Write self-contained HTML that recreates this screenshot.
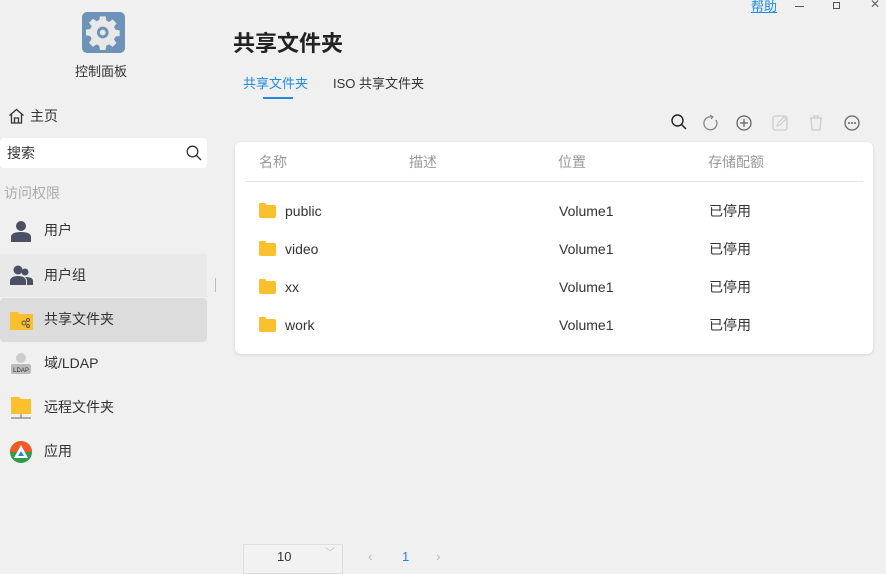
<!DOCTYPE html><html><head><meta charset="utf-8"><style>
*{margin:0;padding:0;box-sizing:border-box}
body{width:886px;height:565px;background:#f0f0f0;font-family:"Liberation Sans","Noto Sans CJK SC",sans-serif;position:relative;overflow:hidden;color:#333;line-height:1.15}
.a{position:absolute}
.t{font-size:14px;white-space:nowrap}
.row{position:absolute;left:0;width:207px;height:44px}
.row span{position:absolute;left:44px;top:13px;font-size:14px;color:#333}
.hd{position:absolute;top:154px;font-size:14px;color:#999}
.fr{position:absolute;font-size:14px;color:#333}
.fold{position:absolute;left:259px;width:17px;height:13px;background:#fbc02d;border-radius:2px}
.fold:before{content:"";position:absolute;left:0;top:-2px;width:7px;height:3px;background:#fbc02d;border-radius:1px}
</style></head><body>
<div class="a" style="left:82px;top:12px;width:43px;height:41px;background:#6e93b8;border-radius:5px"></div>
<svg class="a" style="left:86px;top:15px" width="35" height="35" viewBox="0 0 24 24"><path fill="#e8e8e8" d="M10 2h4l.5 3 2 1 2.5-1.8 2.8 2.8L20 9.5l1 2 3 .5v4l-3 .5-1 2 1.8 2.5-2.8 2.8-2.5-1.8-2 1-.5 3h-4l-.5-3-2-1-2.5 1.8-2.8-2.8L4 18l-1-2-3-.5v-4l3-.5 1-2L2.2 6.5 5 3.7 7.5 5.5l2-1z" transform="translate(0 -1) scale(.96)"/><circle cx="11.5" cy="12" r="4" fill="#6e93b8"/><circle cx="11.5" cy="12" r="2" fill="#e8e8e8"/></svg>
<div class="a t" style="left:75px;top:65px;font-size:13px">控制面板</div>
<svg class="a" style="left:8px;top:108px" width="17" height="16" viewBox="0 0 17 16"><path d="M1.5 7.5L8.5 1.5l7 6M3.5 6v9h10V6M6.5 15v-5h4v5" fill="none" stroke="#333" stroke-width="1.3"/></svg>
<div class="a t" style="left:30px;top:108px">主页</div>
<div class="a" style="left:0;top:138px;width:207px;height:30px;background:#fff;border-radius:4px"></div>
<div class="a t" style="left:7px;top:145px">搜索</div>
<svg class="a" style="left:186px;top:145px" width="16" height="16" viewBox="0 0 16 16"><circle cx="6.5" cy="6.5" r="5.3" fill="none" stroke="#333" stroke-width="1.3"/><path d="M10.5 10.5L15 15" stroke="#333" stroke-width="1.3"/></svg>
<div class="a t" style="left:4px;top:185px;color:#aaa">访问权限</div>
<div class="row" style="top:209px"><svg class="a" style="left:10px;top:11px" width="22" height="22" viewBox="0 0 22 22"><circle cx="11" cy="6" r="5" fill="#4a4f63"/><path d="M1 22v-5c0-3 3-5 10-5s10 2 10 5v5z" fill="#4a4f63"/></svg><span>用户</span></div>
<div class="row" style="top:254px;background:#e9e9e9;height:43px"><svg class="a" style="left:10px;top:11px" width="23" height="20" viewBox="0 0 23 20"><circle cx="8" cy="5" r="4.5" fill="#4a4f63"/><circle cx="15" cy="7" r="3.5" fill="#4a4f63"/><path d="M0 20v-4c0-3 3-5 8-5s8 2 8 5v4zM17 20v-4c0-2-1-3-2-4 5 0 8 1 8 4v4z" fill="#4a4f63"/></svg><span>用户组</span></div>
<div class="a" style="left:215px;top:278px;width:1px;height:14px;background:#bbb"></div>
<div class="row" style="top:298px;background:#dcdcdc;border-radius:4px"><svg class="a" style="left:10px;top:12px" width="23" height="20" viewBox="0 0 23 20"><path d="M0 2h8l2 2h13v16H0z" fill="#fbc02d"/><circle cx="14" cy="13" r="2" fill="none" stroke="#555"/><circle cx="18" cy="10" r="1.5" fill="none" stroke="#555"/><circle cx="18" cy="16" r="1.5" fill="none" stroke="#555"/></svg><span>共享文件夹</span></div>
<div class="row" style="top:342px"><svg class="a" style="left:10px;top:10px" width="22" height="24" viewBox="0 0 22 24"><circle cx="11" cy="6" r="5" fill="#ccc"/><rect x="1" y="12" width="20" height="10" rx="2" fill="#bbb"/><text x="11" y="20" font-size="6" text-anchor="middle" fill="#333" font-family="Liberation Sans">LDAP</text></svg><span>域/LDAP</span></div>
<div class="row" style="top:386px"><svg class="a" style="left:10px;top:10px" width="22" height="24" viewBox="0 0 22 24"><path d="M1 1h8l2 2h10v15H1z" fill="#fbc02d"/><path d="M11 18v4M1 22h20" stroke="#666"/></svg><span>远程文件夹</span></div>
<div class="row" style="top:430px"><svg class="a" style="left:10px;top:11px" width="22" height="22" viewBox="0 0 22 22"><circle cx="11" cy="11" r="11" fill="#2e9a4a"/><path d="M0 11A11 11 0 0 1 22 11z" fill="#f05a28"/><path d="M11 4L4 17h14z" fill="#fff"/><path d="M11 10l-3 5h6z" fill="#1e88e5"/></svg><span>应用</span></div>

<div class="a" style="left:233px;top:31px;font-size:22px;font-weight:bold;color:#222">共享文件夹</div>
<div class="a t" style="left:243px;top:77px;color:#1e88e5;font-size:13px">共享文件夹</div>
<div class="a" style="left:263px;top:97px;width:30px;height:2px;background:#1e88e5"></div>
<div class="a t" style="left:333px;top:77px;font-size:13px">ISO 共享文件夹</div>
<div class="a t" style="left:751px;top:0;color:#1e88e5;text-decoration:underline;font-size:13px">帮助</div>
<div class="a" style="left:795px;top:6px;width:9px;height:1px;background:#555"></div>
<div class="a" style="left:833px;top:2px;width:7px;height:7px;border:1px solid #555"></div>
<div class="a" style="left:870px;top:-2px;font-size:12px;color:#666">✕</div>
<svg class="a" style="left:670px;top:113px" width="200" height="20" viewBox="0 0 200 20">
<circle cx="7.5" cy="7.5" r="5.5" fill="none" stroke="#222" stroke-width="1.4"/><path d="M11.5 11.5L16 16" stroke="#222" stroke-width="1.5"/>
<path d="M42 4a6.5 6.5 0 1 0 4 3" fill="none" stroke="#888" stroke-width="1.3"/><path d="M40 2l3 2-2 2" fill="none" stroke="#888" stroke-width="1.2"/>
<circle cx="74" cy="10" r="7" fill="none" stroke="#666" stroke-width="1.3"/><path d="M70 10h8M74 6v8" stroke="#666" stroke-width="1.3"/>
<rect x="103" y="3" width="14" height="14" rx="2" fill="none" stroke="#ccc" stroke-width="1.3"/><path d="M107 13l1-3 6-6 2 2-6 6z" fill="none" stroke="#ccc"/>
<path d="M140 5h12M144 5V3h4v2M141 5l1 12h8l1-12" fill="none" stroke="#ccc" stroke-width="1.3"/>
<circle cx="182" cy="10" r="7" fill="none" stroke="#666" stroke-width="1.3"/><circle cx="179" cy="10" r="1" fill="#666"/><circle cx="182" cy="10" r="1" fill="#666"/><circle cx="185" cy="10" r="1" fill="#666"/></svg>
<div class="a" style="left:235px;top:142px;width:638px;height:212px;background:#fff;border-radius:6px;box-shadow:0 1px 3px rgba(0,0,0,.12)"></div>
<div class="hd" style="left:259px">名称</div><div class="hd" style="left:409px">描述</div><div class="hd" style="left:558px">位置</div><div class="hd" style="left:708px">存储配额</div>
<div class="a" style="left:245px;top:181px;width:618px;height:1px;background:#e6e6e6"></div>
<div class="fold" style="top:205px"></div><div class="fr" style="left:285px;top:203px">public</div><div class="fr" style="left:559px;top:203px">Volume1</div><div class="fr" style="left:709px;top:203px">已停用</div>
<div class="fold" style="top:243px"></div><div class="fr" style="left:285px;top:241px">video</div><div class="fr" style="left:559px;top:241px">Volume1</div><div class="fr" style="left:709px;top:241px">已停用</div>
<div class="fold" style="top:281px"></div><div class="fr" style="left:285px;top:279px">xx</div><div class="fr" style="left:559px;top:279px">Volume1</div><div class="fr" style="left:709px;top:279px">已停用</div>
<div class="fold" style="top:319px"></div><div class="fr" style="left:285px;top:317px">work</div><div class="fr" style="left:559px;top:317px">Volume1</div><div class="fr" style="left:709px;top:317px">已停用</div>
<div class="a" style="left:243px;top:544px;width:100px;height:30px;border:1px solid #ddd;background:#f2f2f2"></div>
<div class="a" style="left:277px;top:550px;font-size:13px">10</div>
<div class="a" style="left:325px;top:548px;font-size:10px;color:#bbb">﹀</div>
<div class="a" style="left:368px;top:548px;font-size:14px;color:#bbb">‹</div>
<div class="a" style="left:402px;top:550px;font-size:13px;color:#1e88e5">1</div>
<div class="a" style="left:436px;top:548px;font-size:14px;color:#bbb">›</div>
</body></html>
